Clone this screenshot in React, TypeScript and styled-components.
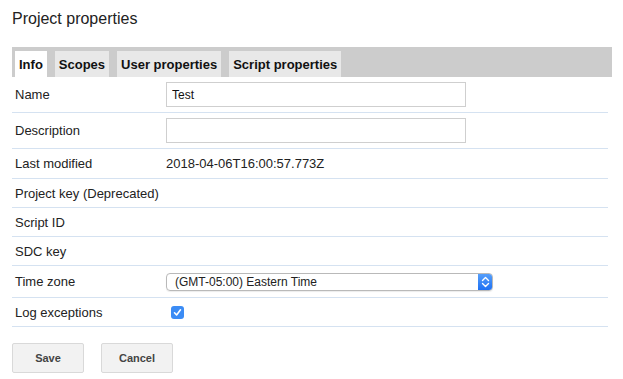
import React from 'react'
import styled, { createGlobalStyle } from 'styled-components'

const GlobalStyle = createGlobalStyle`
  body {
    margin: 0;
    background: #fff;
    font-family: Arial, "Liberation Sans", sans-serif;
    color: #222;
  }
`

const tabs = ['Info', 'Scopes', 'User properties', 'Script properties']

const Page = styled.div`
  width: 623px;
  padding: 9px 0 0 12px;
  box-sizing: border-box;
`

const Title = styled.h1`
  margin: 0;
  font-size: 16px;
  font-weight: normal;
  line-height: 20px;
  color: #222;
`

const TabBar = styled.div`
  margin-top: 18px;
  width: 600px;
  height: 30px;
  background: #cccccc;
  display: flex;
  align-items: flex-end;
  gap: 8px;
  padding-left: 3px;
  box-sizing: border-box;
`

const Tab = styled.div<{ $active?: boolean }>`
  height: 26px;
  padding: 0 4px;
  display: flex;
  align-items: center;
  font-size: 13px;
  font-weight: bold;
  color: #111;
  background: ${p => (p.$active ? '#ffffff' : '#e8e8e8')};
`

const Table = styled.div`
  width: 596px;
`

const Row = styled.div<{ $h: number }>`
  display: flex;
  align-items: center;
  height: ${p => p.$h}px;
  border-bottom: 1px solid #d5e2f1;
`

const Label = styled.div`
  width: 151px;
  padding-left: 3px;
  font-size: 13px;
  color: #222;
`

const Value = styled.div`
  font-size: 13px;
  color: #222;
`

const TextInput = styled.input`
  width: 300px;
  height: 25px;
  box-sizing: border-box;
  border: 1px solid #cfcfcf;
  padding: 0 5px;
  font-family: Arial, "Liberation Sans", sans-serif;
  font-size: 12px;
  color: #111;
  outline: none;
`

const Select = styled.div`
  width: 327px;
  height: 18px;
  box-sizing: border-box;
  border: 1px solid #b9b9b9;
  border-radius: 4px;
  display: flex;
  align-items: center;
  justify-content: space-between;
  font-size: 12px;
  color: #222;
  padding-left: 8px;
  overflow: hidden;
  box-shadow: 0 1px 1px rgba(0, 0, 0, 0.08);
`

const Stepper = styled.span`
  width: 15px;
  height: 18px;
  margin-right: -1px;
  background: linear-gradient(#5aa2fb, #1a6ef3);
  border-radius: 0 4px 4px 0;
  display: flex;
  align-items: center;
  justify-content: center;
`

const Check = styled.span`
  width: 13px;
  height: 13px;
  margin-left: 5px;
  border-radius: 3px;
  background: #3b8cf5;
  display: flex;
  align-items: center;
  justify-content: center;
`

const Buttons = styled.div`
  display: flex;
  gap: 17px;
  margin-top: 16px;
`

const Button = styled.button`
  width: 72px;
  height: 30px;
  background: #f2f2f2;
  border: 1px solid #d9d9d9;
  border-radius: 2px;
  font-family: Arial, "Liberation Sans", sans-serif;
  font-size: 11px;
  font-weight: bold;
  color: #444;
`

const App = () => {
  return (
    <Page>
      <GlobalStyle />
      <Title>Project properties</Title>
      <TabBar>
        {tabs.map((t, i) => (
          <Tab key={t} $active={i === 0}>{t}</Tab>
        ))}
      </TabBar>
      <Table>
        <Row $h={35}>
          <Label>Name</Label>
          <TextInput defaultValue="Test" />
        </Row>
        <Row $h={35}>
          <Label>Description</Label>
          <TextInput defaultValue="" />
        </Row>
        <Row $h={29}>
          <Label>Last modified</Label>
          <Value>2018-04-06T16:00:57.773Z</Value>
        </Row>
        <Row $h={28}>
          <Label>Project key (Deprecated)</Label>
        </Row>
        <Row $h={28}>
          <Label>Script ID</Label>
        </Row>
        <Row $h={28}>
          <Label>SDC key</Label>
        </Row>
        <Row $h={31}>
          <Label>Time zone</Label>
          <Select>
            <span>(GMT-05:00) Eastern Time</span>
            <Stepper>
              <svg width="9" height="12" viewBox="0 0 9 12" fill="none" stroke="#fff" strokeWidth="1.4" strokeLinecap="round" strokeLinejoin="round">
                <path d="M1.5 4.5 L4.5 1.5 L7.5 4.5" />
                <path d="M1.5 7.5 L4.5 10.5 L7.5 7.5" />
              </svg>
            </Stepper>
          </Select>
        </Row>
        <Row $h={28}>
          <Label>Log exceptions</Label>
          <Check>
            <svg width="9" height="9" viewBox="0 0 9 9" fill="none" stroke="#fff" strokeWidth="1.6" strokeLinecap="round" strokeLinejoin="round">
              <path d="M1.5 4.8 L3.6 7 L7.5 1.8" />
            </svg>
          </Check>
        </Row>
      </Table>
      <Buttons>
        <Button>Save</Button>
        <Button>Cancel</Button>
      </Buttons>
    </Page>
  )
}

export default App
